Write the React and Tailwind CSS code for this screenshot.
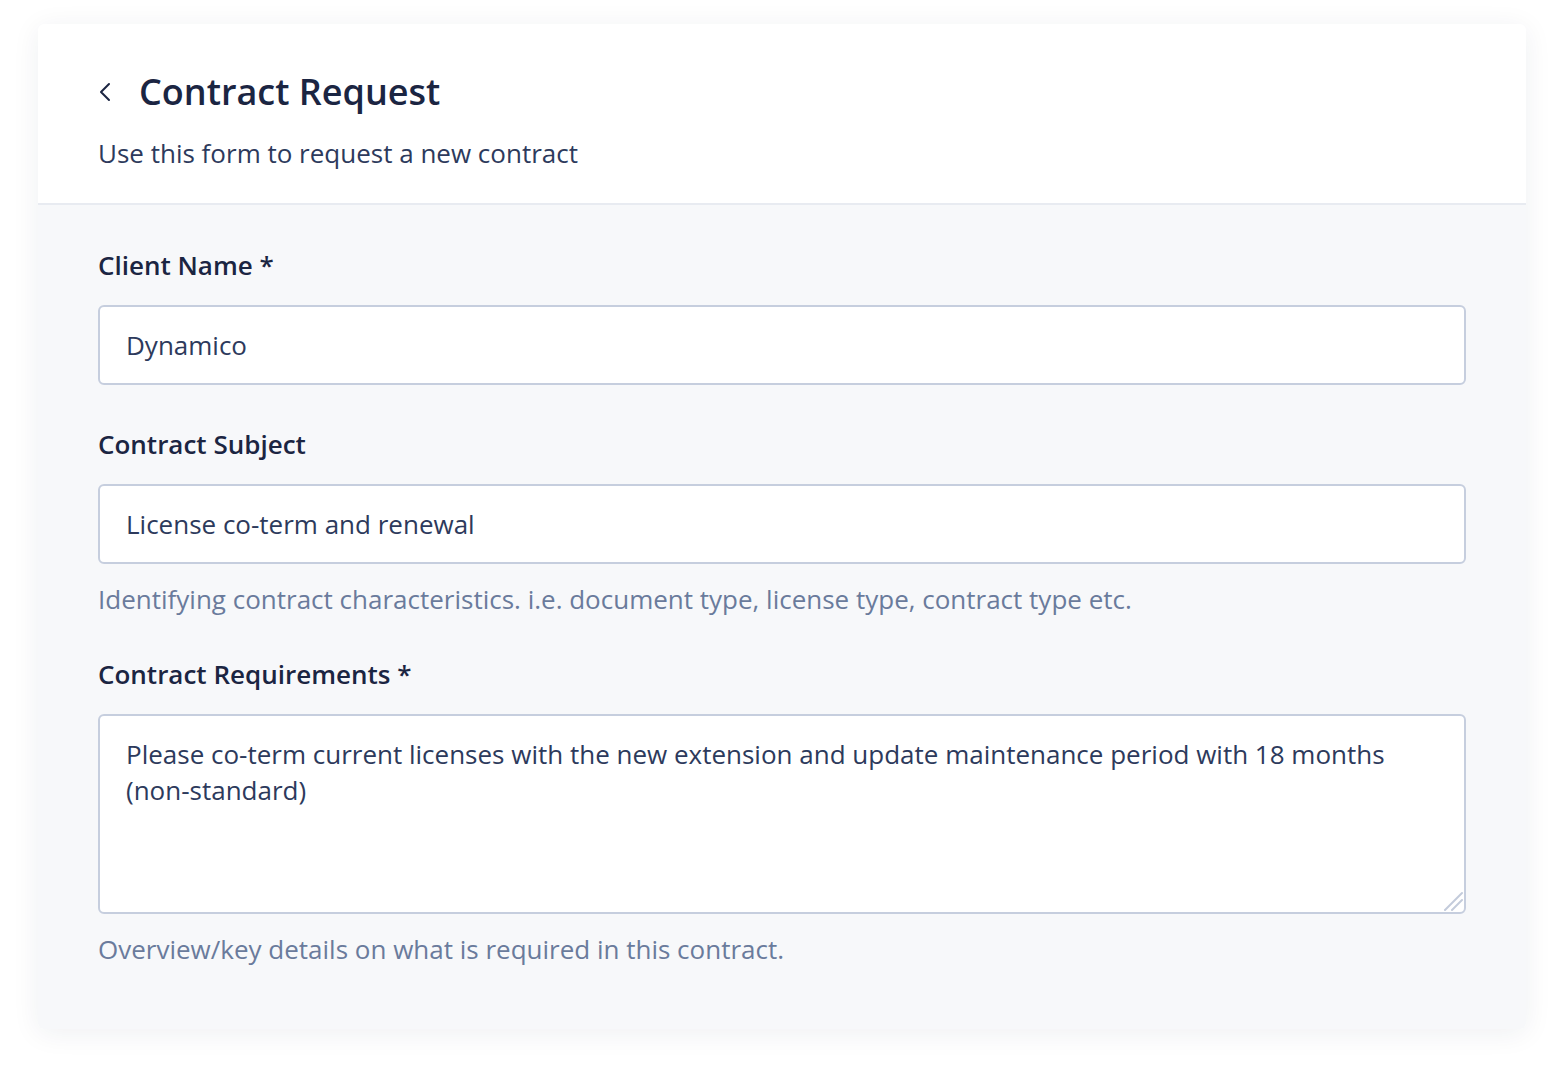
import { ChevronLeft } from 'lucide-react';

const font = { fontFamily: '"Open Sans", "Noto Sans", sans-serif' };

function Field({ label, required, children, help }) {
  return (
    <div className="flex flex-col">
      <label className="text-[26px] leading-[32px] font-semibold text-[#1b2542]">
        {label}
        {required && ' *'}
      </label>
      <div className="mt-6">{children}</div>
      {help && (
        <p className="mt-[19px] text-[26px] leading-[32px] text-[#6a7b9c]">{help}</p>
      )}
    </div>
  );
}

export default function App() {
  return (
    <div className="min-h-screen bg-white pt-6" style={font}>
      <div className="ml-[38px] w-[1488px] overflow-hidden rounded-md bg-white shadow-[0_4px_28px_rgba(30,40,70,0.07)]">
        {/* Header */}
        <div className="border-b-2 border-[#e8ebf1] px-[60px] pt-11 pb-[34px]">
          <div className="flex items-center">
            <ChevronLeft className="-ml-[9px] h-8 w-8 text-[#1b2542]" strokeWidth={1.5} />
            <h1 className="ml-[18px] text-[36px] leading-[48px] font-semibold text-[#1b2542]">
              Contract Request
            </h1>
          </div>
          <p className="mt-[21px] text-[26px] leading-[32px] text-[#2d3a5c]">
            Use this form to request a new contract
          </p>
        </div>

        {/* Form body */}
        <div className="flex flex-col gap-[43px] bg-[#f7f8fa] px-[60px] pt-11 pb-16">
          <Field label="Client Name" required>
            <input
              readOnly
              value="Dynamico"
              className="h-20 w-full rounded-md border-2 border-[#c6cede] bg-white px-[26px] text-[26px] text-[#2d3a5c] outline-none"
            />
          </Field>
          <Field
            label="Contract Subject"
            help="Identifying contract characteristics. i.e. document type, license type, contract type etc."
          >
            <input
              readOnly
              value="License co-term and renewal"
              className="h-20 w-full rounded-md border-2 border-[#c6cede] bg-white px-[26px] text-[26px] text-[#2d3a5c] outline-none"
            />
          </Field>
          <Field
            label="Contract Requirements"
            required
            help="Overview/key details on what is required in this contract."
          >
            <div className="relative">
              <textarea
                readOnly
                value="Please co-term current licenses with the new extension and update maintenance period with 18 months (non-standard)"
                className="block h-[200px] w-full resize-none rounded-md border-2 border-[#c6cede] bg-white px-[26px] py-[20px] text-[26px] leading-[36px] text-[#2d3a5c] outline-none"
              />
              {/* resize grip */}
              <svg
                className="pointer-events-none absolute right-[3px] bottom-[3px] h-[20px] w-[20px]"
                viewBox="0 0 20 20"
                fill="none"
                stroke="#c3cbdb"
                strokeWidth="2"
                strokeLinecap="round"
              >
                <path d="M19 2 L2 19" />
                <path d="M19 9 L9 19" />
              </svg>
            </div>
          </Field>
        </div>
      </div>
    </div>
  );
}
